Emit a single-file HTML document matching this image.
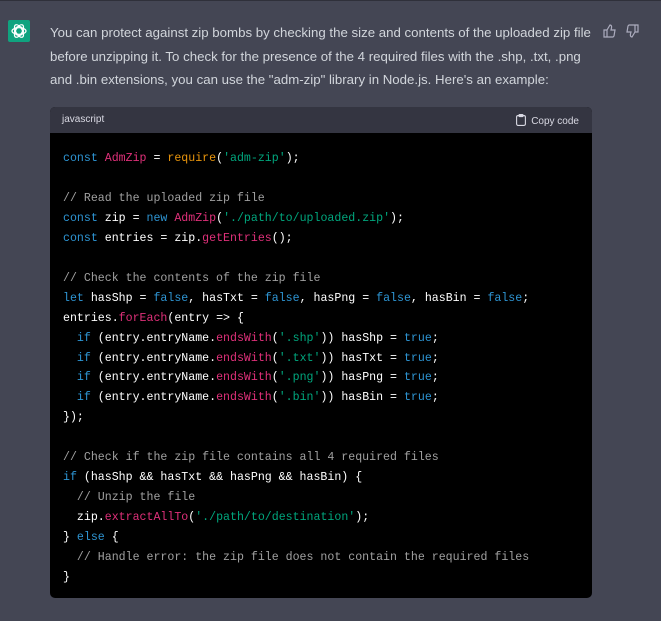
<!DOCTYPE html>
<html><head><style>
body{margin:0;width:661px;height:621px;background:#444654;overflow:hidden;font-family:"Liberation Sans",sans-serif;position:relative}
.top{position:absolute;left:0;top:0;width:661px;height:1px;background:#2f303a}
.logo{position:absolute;left:8px;top:20px;width:22px;height:22px;background:#10a37f;border-radius:2px}
.txt{position:absolute;left:50px;top:21px;width:560px;color:#d1d5db;font-size:13.25px;line-height:23.6px}
.code{position:absolute;left:50px;top:107px;width:542px;height:491px;background:#000;border-radius:5px;overflow:hidden}
.hdr{height:26px;background:#343541;color:#d9d9e3;font-size:10px;position:relative}
.hdr .l{position:absolute;left:12px;top:7px}
.hdr .cp{position:absolute;right:13px;top:7px;color:#d9d9e3}
pre{margin:0;padding:16px 13px;font-family:"Liberation Mono",monospace;font-size:11.6px;line-height:19.95px;color:#fff}
.k{color:#2e95d3}.c{color:#e9950c}.r{color:#df3079}.s{color:#00a67d}.m{color:#a0a0a0}
</style></head><body>
<div class="top"></div>
<div class="logo"><svg width="22" height="22" viewBox="0 0 22 22"><g fill="none" stroke="#fff" stroke-width="1.2"><circle cx="11" cy="11" r="4.5"/><ellipse cx="11" cy="11" rx="7" ry="3.3"/><ellipse cx="11" cy="11" rx="7" ry="3.3" transform="rotate(60 11 11)"/><ellipse cx="11" cy="11" rx="7" ry="3.3" transform="rotate(120 11 11)"/></g></svg></div>
<div class="txt">You can protect against zip bombs by checking the size and contents of the uploaded zip file<br>before unzipping it. To check for the presence of the 4 required files with the .shp, .txt, .png<br>and .bin extensions, you can use the "adm-zip" library in Node.js. Here's an example:</div>
<svg style="position:absolute;left:603px;top:24px" width="36" height="14" viewBox="0 0 36 14" fill="none" stroke="#acacbe" stroke-width="1.2"><path d="M1 6h3v7H1zM4 6l3-5c1 0 2 1 1.5 3L8 6h4l-1 6-1 1H4"/><path d="M35 8h-3V1h3zM32 8l-3 5c-1 0-2-1-1.5-3L28 8h-4l1-6 1-1h6"/></svg>
<div class="code"><div class="hdr"><span class="l">javascript</span><span class="cp"><svg width="10" height="12" viewBox="0 0 10 12" style="vertical-align:-2px;margin-right:5px" fill="none" stroke="#d9d9e3" stroke-width="1.1"><rect x="0.6" y="1.6" width="8.8" height="9.8" rx="1.5"/><rect x="3" y="0.6" width="4" height="2" rx=".5"/></svg>Copy code</span></div>
<pre><span class="k">const</span> <span class="r">AdmZip</span> = <span class="c">require</span>(<span class="s">'adm-zip'</span>);

<span class="m">// Read the uploaded zip file</span>
<span class="k">const</span> zip = <span class="k">new</span> <span class="r">AdmZip</span>(<span class="s">'./path/to/uploaded.zip'</span>);
<span class="k">const</span> entries = zip.<span class="r">getEntries</span>();

<span class="m">// Check the contents of the zip file</span>
<span class="k">let</span> hasShp = <span class="k">false</span>, hasTxt = <span class="k">false</span>, hasPng = <span class="k">false</span>, hasBin = <span class="k">false</span>;
entries.<span class="r">forEach</span>(entry =&gt; {
  <span class="k">if</span> (entry.entryName.<span class="r">endsWith</span>(<span class="s">'.shp'</span>)) hasShp = <span class="k">true</span>;
  <span class="k">if</span> (entry.entryName.<span class="r">endsWith</span>(<span class="s">'.txt'</span>)) hasTxt = <span class="k">true</span>;
  <span class="k">if</span> (entry.entryName.<span class="r">endsWith</span>(<span class="s">'.png'</span>)) hasPng = <span class="k">true</span>;
  <span class="k">if</span> (entry.entryName.<span class="r">endsWith</span>(<span class="s">'.bin'</span>)) hasBin = <span class="k">true</span>;
});

<span class="m">// Check if the zip file contains all 4 required files</span>
<span class="k">if</span> (hasShp &amp;&amp; hasTxt &amp;&amp; hasPng &amp;&amp; hasBin) {
  <span class="m">// Unzip the file</span>
  zip.<span class="r">extractAllTo</span>(<span class="s">'./path/to/destination'</span>);
} <span class="k">else</span> {
  <span class="m">// Handle error: the zip file does not contain the required files</span>
}</pre></div>
</body></html>
